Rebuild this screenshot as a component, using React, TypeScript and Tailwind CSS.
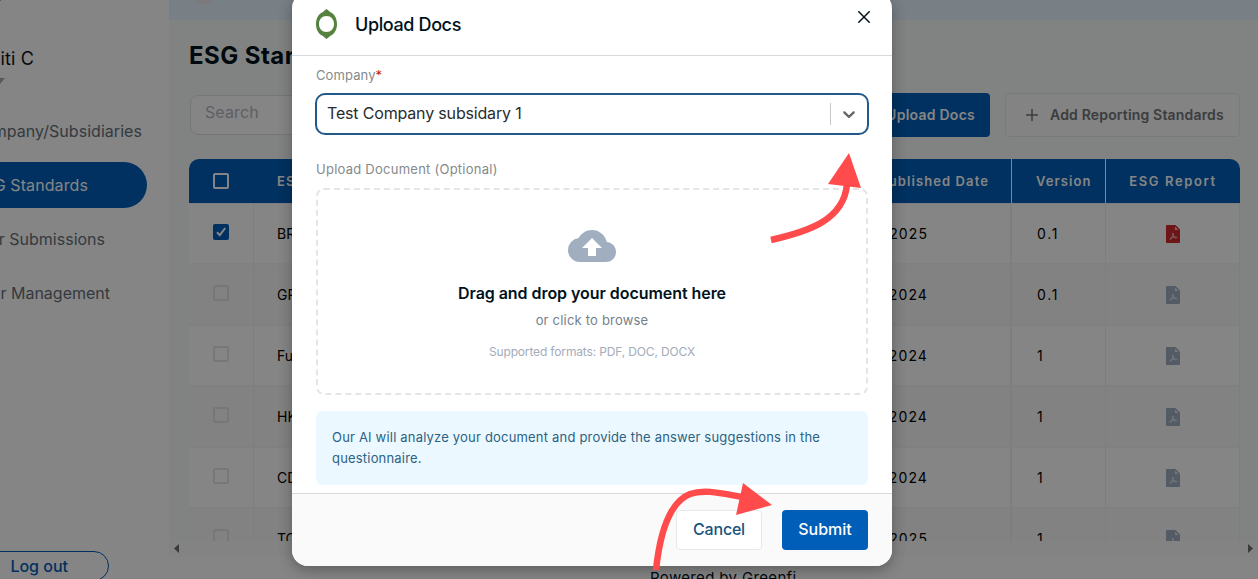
import React from "react";
import { MdCloudUpload } from "react-icons/md";

const rows = [
  { name: "BRSR", date: "2025", version: "0.1", checked: true },
  { name: "GRI", date: "2024", version: "0.1" },
  { name: "Fund", date: "2024", version: "1" },
  { name: "HKEX", date: "2024", version: "1" },
  { name: "CDP", date: "2024", version: "1" },
  { name: "TCFD", date: "2025", version: "1" },
];

function Sidebar() {
  return (
    <aside className="flex h-full w-[169px] shrink-0 flex-col overflow-hidden bg-white whitespace-nowrap [&>*]:shrink-0">
      <div className="flex h-[10px]">
        <div className="-mt-[16px] -ml-[17px] size-5 rounded-full bg-[#4c8a35]" />
      </div>
      <div className="mt-[34px] flex h-7 w-[34px] items-center justify-end text-[18px] tracking-[0.15px] text-[#0a141c]">
        Aditi C
      </div>
      <svg className="mt-[6px] -ml-[5px] h-[6px] w-[10px]" viewBox="0 0 10 6">
        <path d="M0 0H10L5 6Z" fill="#a9a9bb" />
      </svg>
      <div className="mt-[34px] flex h-[26px] w-[142px] items-center justify-end text-[16px] tracking-[0.05px] text-[#66707a]">
        Company/Subsidiaries
      </div>
      <div className="mt-[18px] flex h-[46px] w-[147px] items-center justify-end rounded-r-full bg-[#005eb8] pr-[59px] pb-px text-[16px] tracking-[0.1px] text-white">
        ESG Standards
      </div>
      <div className="mt-[17px] flex h-7 w-[105px] items-center justify-end text-[16px] text-[#66707a]">
        User Submissions
      </div>
      <div className="mt-[26px] flex h-7 w-[110px] items-center justify-end text-[16px] text-[#66707a]">
        User Management
      </div>
      <div className="mt-[244px] -ml-5 flex h-[30px] w-[129px] items-center justify-end rounded-full border border-[#005eb8] pr-[40px] pb-px text-[16px] font-medium text-[#005eb8]">
        Log out
      </div>
    </aside>
  );
}

function PdfIcon({ active }: { active?: boolean }) {
  return (
    <svg className={"h-[18px] w-[14px] " + (active ? "text-[#d32a2e]" : "text-[#a0aec0]")} viewBox="0 0 14 18">
      <path d="M1 0H9.500L14 4.500V17Q14 18 13 18H1Q0 18 0 17V1Q0 0 1 0Z" fill="currentColor" />
      <path d="M9 1.500V5H12.500Z" fill="#fff" opacity="0.700" />
      <path
        d="M6.800 8C7.600 8.200 6.800 10.800 5.600 12.800S3.600 14.800 4 13.800S8 11.800 9.800 12S10.800 13.400 9.400 13S6.200 8.600 6.800 8Z"
        fill="none"
        stroke="#fff"
        strokeWidth="0.900"
        opacity="0.700"
      />
    </svg>
  );
}

function Checkbox({ checked }: { checked?: boolean }) {
  if (checked) {
    return (
      <span className="flex size-4 items-center justify-center rounded-[2px] bg-[#005eb8]">
        <svg className="size-3" viewBox="0 0 12 12" fill="none" stroke="#fff" strokeWidth="2">
          <path d="M2 6.2L4.8 9.2L10.2 2" />
        </svg>
      </span>
    );
  }
  return <span className="size-4 rounded-[2px] border-2 border-[#e2e4ea]" />;
}

function StandardsTable() {
  return (
    <div className="mt-[22px] flex h-[382px] w-[1051px] flex-col overflow-hidden rounded-t-[10px]">
      <div className="flex h-11 shrink-0 bg-[#005eb8] text-[13px] font-semibold tracking-[1.1px] text-white">
        <div className="flex w-16 shrink-0 items-center justify-center">
          <span className="size-4 rounded-[2px] border-2 border-white" />
        </div>
        <div className="flex flex-1 items-center pt-px pl-6">ESG Standard</div>
        <div className="flex w-[170px] items-center justify-end border-r border-white pt-px pr-[22px]">Published Date</div>
        <div className="flex w-[94px] items-center border-r border-white pt-px pl-6 tracking-[1.1px]">Version</div>
        <div className="flex w-[134px] items-center justify-center pt-px tracking-[1.6px]">ESG Report</div>
      </div>
      <div className="h-px shrink-0 bg-[#f1f2f3]" />
      {rows.map((row, i) => (
        <div
          key={row.name}
          className={
            "flex h-[61px] shrink-0 border-b-2 border-[#f5f6f7] text-[14px] text-black " +
            (i % 2 ? "bg-[#fafafa]" : "bg-white")
          }
        >
          <div className="flex w-[65px] shrink-0 items-center justify-center border-r border-[#f1f2f3] pb-[3px]">
            <Checkbox checked={row.checked} />
          </div>
          <div className="flex flex-1 items-center pl-[23px]">{row.name}</div>
          <div className="flex w-[170px] items-center justify-end border-r-2 border-[#f1f2f3] pr-[82px] tracking-[1.1px]">
            {row.date}
          </div>
          <div className="flex w-[94px] items-center border-r border-[#f1f2f3] pl-[25px] tracking-[1.7px]">{row.version}</div>
          <div className="flex w-[134px] items-center justify-center border-r border-[#f1f2f3] pt-px">
            <PdfIcon active={row.checked} />
          </div>
        </div>
      ))}
    </div>
  );
}

function Main() {
  return (
    <main className="flex h-full flex-1 flex-col bg-white">
      <div className="flex h-5 shrink-0 bg-[#e6f3ff] pl-[23px]">
        <div className="-mt-5 size-6 rounded-full bg-[#eee8ee]" />
      </div>
      <div className="flex h-[521px] shrink-0 flex-col bg-[#f7fbfa] pl-5">
        <h1 className="mt-5 text-[24px] leading-8 font-bold tracking-[0.45px] text-[#01121c]">ESG Standards</h1>
        <div className="mt-[21px] flex h-11 w-[1051px] items-center">
          <div className="ml-px flex h-10 w-[300px] items-center rounded-[8px] border border-[#dfe5ea] bg-white pb-[6px] pl-[14px] text-[16px] tracking-[0.1px] text-[#b4b9bf]">
            Search
          </div>
          <div className="ml-auto flex h-11 w-[160px] items-center justify-end rounded-[4px] bg-[#005eb8] pr-[15px] pb-px text-[14px] font-semibold tracking-[0.25px] text-white">
            Upload Docs
          </div>
          <div className="ml-[15px] flex h-11 w-[235px] items-center rounded-[4px] border border-[#e7eaec] bg-[#fbfbfb] pl-5 text-[14px] font-semibold tracking-[0.17px] text-[#717579]">
            <svg className="mr-3 size-3" viewBox="0 0 12 12" stroke="#717579" strokeWidth="1.5">
              <path d="M6 0V12M0 6H12" />
            </svg>
            <span className="pb-[2px]">Add Reporting Standards</span>
          </div>
        </div>
        <StandardsTable />
      </div>
      <div className="flex h-[15px] shrink-0 items-center justify-between bg-[#fbfbfb] px-[5px] text-[#707070]">
        <svg className="h-[9px] w-[5px]" viewBox="0 0 5 9" fill="currentColor">
          <path d="M5 0V9L0 4.5Z" />
        </svg>
        <svg className="h-[9px] w-[5px]" viewBox="0 0 5 9" fill="currentColor">
          <path d="M0 0V9L5 4.5Z" />
        </svg>
      </div>
      <div className="mt-[10px] ml-[481px] h-[13px] overflow-hidden text-[15px] leading-[23px] tracking-[0.35px] whitespace-nowrap text-[#01121c]">
        Powered by Greenfi
      </div>
    </main>
  );
}

function UploadModal() {
  return (
    <div className="-mt-[8px] flex h-[574px] w-[600px] flex-col overflow-hidden rounded-[16px] bg-white shadow-[0_4px_14px_rgba(0,0,0,0.3)]">
      <header className="flex h-16 shrink-0 items-center border-b border-[#d7dadd] px-[22px]">
        <svg className="h-[30px] w-[24px]" viewBox="0 0 24 30">
          <path
            fillRule="evenodd"
            fill="#55833f"
            d="M12.500 0L16.500 3.200C20.500 5 23 9.500 23 15S20.500 25 16.500 26.800L12.500 30L8.500 26.800C4.500 25 2 20.500 2 15S4.500 5 8.500 3.200ZM12.500 7C8 7 5 10.500 5 15S8 23 12.500 23S20 19.500 20 15S17 7 12.500 7Z"
          />
        </svg>
        <h2 className="ml-[17px] pt-[2px] text-[18px] font-medium tracking-[-0.38px] text-[#01121c]">Upload Docs</h2>
        <svg className="mb-[14px] ml-auto size-3" viewBox="0 0 12 12" stroke="#06151c" strokeWidth="1.5">
          <path d="M0.300 0.300L11.700 11.700M11.700 0.300L0.300 11.700" />
        </svg>
      </header>
      <div className="flex flex-1 flex-col px-6">
        <div className="mt-[9px] text-[13px] leading-5 tracking-[0.1px] text-[#858a8c]">
          Company<span className="text-[#b91c1c]">*</span>
        </div>
        <div className="mt-2 -ml-px flex h-[42px] w-[554px] shrink-0 items-center rounded-[10px] border-2 border-[#22598a] text-[16px] text-[#292c2e]">
          <span className="flex-1 pb-[2px] pl-[10px] tracking-[-0.17px]">Test Company subsidary 1</span>
          <span className="h-[22px] w-px bg-[#c6c9cc]" />
          <svg className="mr-2 ml-2 size-5" viewBox="0 0 20 20" fill="#666">
            <path d="M4.516 7.548c0.436-0.446 1.043-0.481 1.576 0l3.908 3.747 3.908-3.747c0.533-0.481 1.141-0.446 1.574 0 0.436 0.445 0.408 1.197 0 1.615-0.406 0.418-4.695 4.502-4.695 4.502-0.217 0.223-0.502 0.335-0.787 0.335s-0.570-0.112-0.789-0.335c0 0-4.287-4.084-4.695-4.502s-0.436-1.170 0-1.615z" />
          </svg>
        </div>
        <div className="mt-6 text-[13px] leading-5 tracking-[0.25px] text-[#858a8c]">Upload Document (Optional)</div>
        <div className="mt-[9px] flex h-[207px] w-[552px] shrink-0 flex-col items-center rounded-[8px] border-2 border-dashed border-[#e2e6e9]">
          <MdCloudUpload size={48} className="mt-8 text-[#a0aec0]" />
          <div className="mt-[11px] text-[16px] leading-6 font-semibold tracking-[-0.05px] text-[#01121c]">
            Drag and drop your document here
          </div>
          <div className="mt-[5px] text-[13px] leading-5 tracking-[0.2px] text-[#737f8a]">or click to browse</div>
          <div className="mt-[13px] text-[12px] leading-[18px] tracking-[-0.15px] text-[#a3acb8]">Supported formats: PDF, DOC, DOCX</div>
        </div>
        <div className="mt-4 h-[74px] w-[552px] shrink-0 rounded-[6px] bg-[#ebf8ff] px-4 pt-4 text-[13px] leading-[21px] tracking-[0.19px] text-[#2c6282]">
          Our AI will analyze your document and provide the answer suggestions in the questionnaire.
        </div>
      </div>
      <footer className="flex h-[73px] shrink-0 items-center justify-end gap-5 border-t border-[#d7dadd] bg-[#fafafa] pr-6">
        <button className="h-10 w-[86px] rounded-[4px] border border-[#e4e9ed] bg-white pb-[2px] text-[16px] font-medium tracking-[-0.2px] text-[#19537e]">Cancel</button>
        <button className="h-10 w-[86px] rounded-[4px] bg-[#005eb8] pb-[2px] text-[16px] font-medium text-white">Submit</button>
      </footer>
    </div>
  );
}

export default function App() {
  return (
    <div className="relative h-[579px] w-[1258px] overflow-hidden font-['Inter','Liberation_Sans',sans-serif]">
      <div className="flex h-full">
        <Sidebar />
        <Main />
      </div>
      <div className="absolute inset-0 flex items-start justify-center bg-black/48 pr-[74px]">
        <UploadModal />
      </div>
      <svg className="pointer-events-none absolute inset-0 h-[579px] w-[1258px]" viewBox="0 0 1258 579" fill="none">
        <path d="M771 240C806 232 844 221 847 184" stroke="#ff4b4b" strokeWidth="6.500" />
        <path d="M849 153L861 188L828 184Z" fill="#ff4b4b" />
        <path d="M656 570C660 532 670 502 690 494C704 489 720 493 742 497" stroke="#ff4b4b" strokeWidth="6.500" />
        <path d="M772 505L743 483L736 515Z" fill="#ff4b4b" />
      </svg>
    </div>
  );
}
